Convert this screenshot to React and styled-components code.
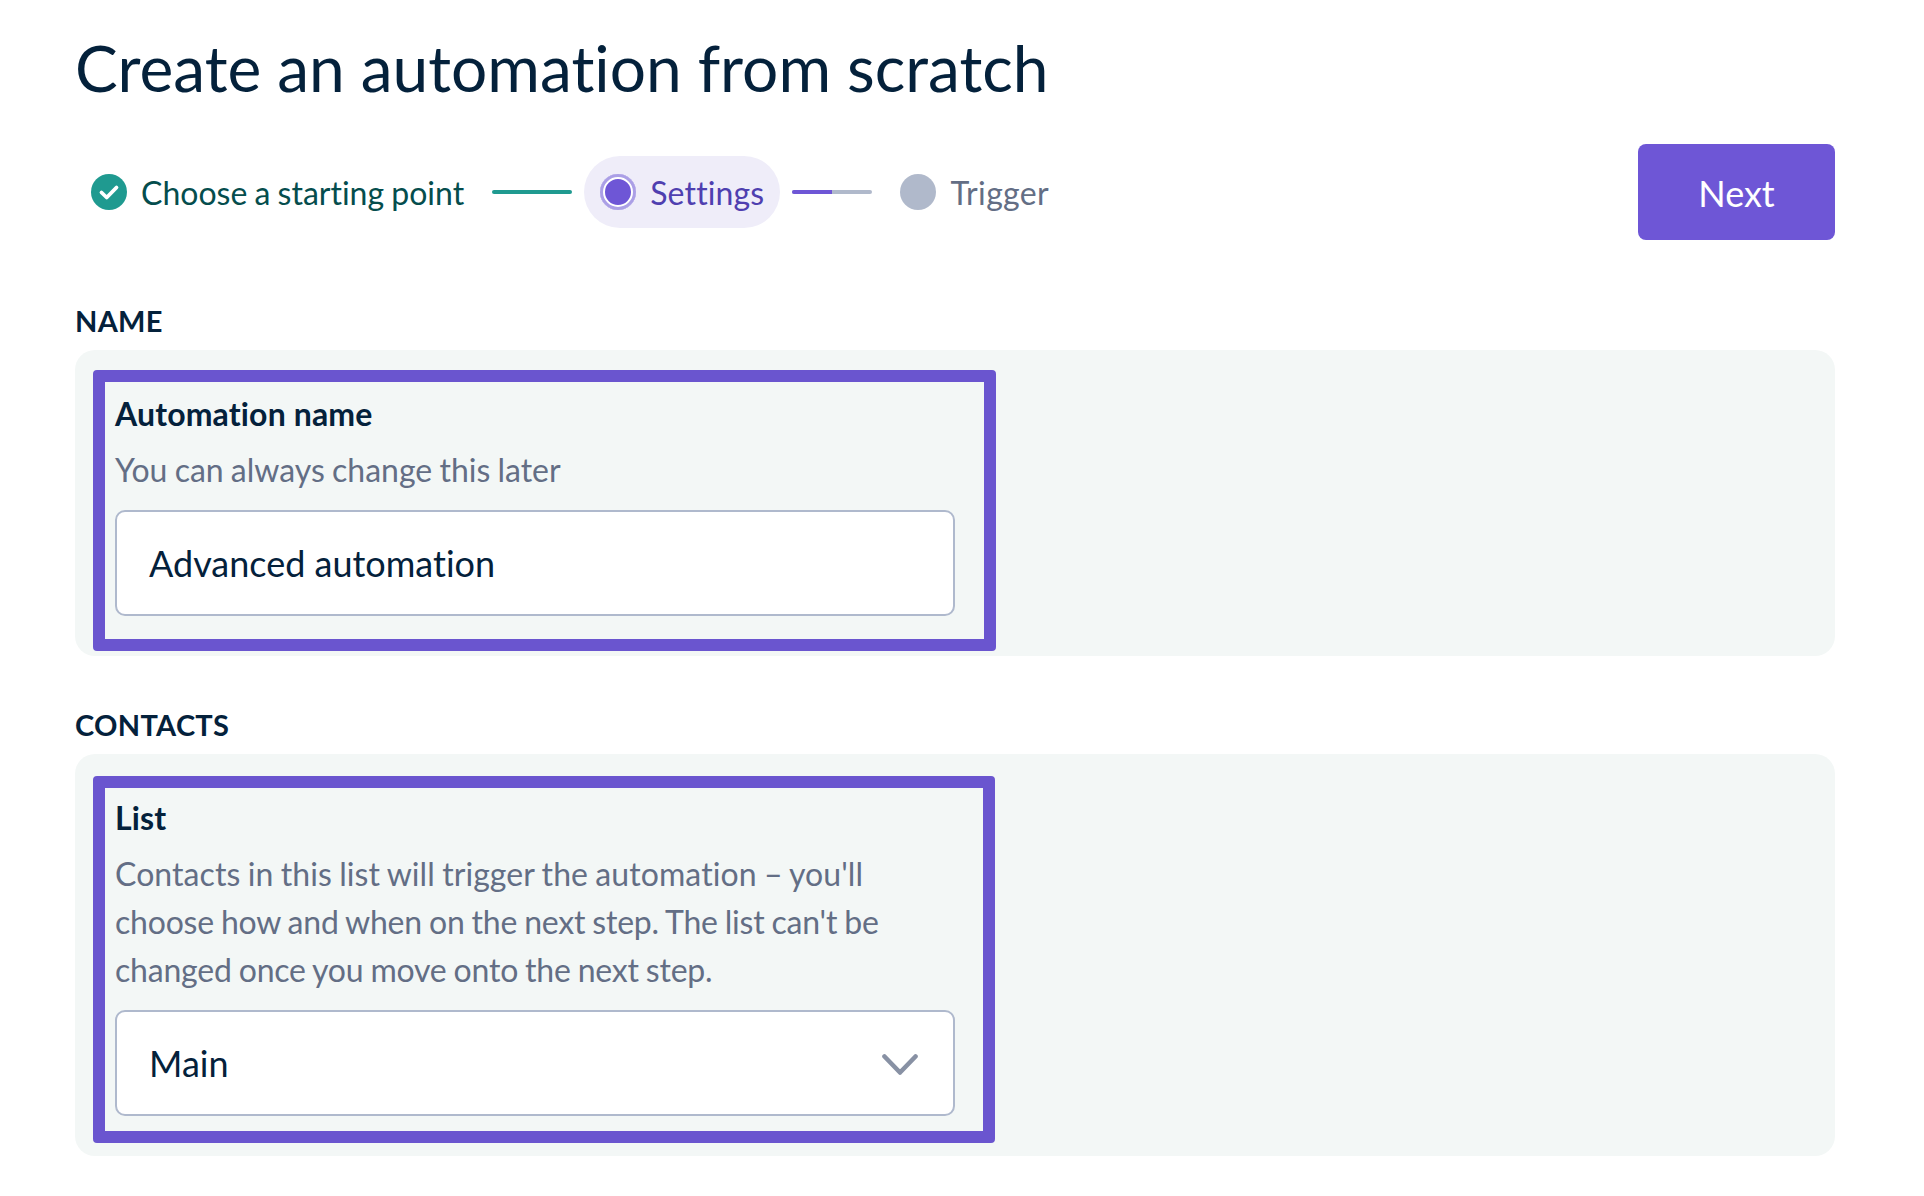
import React from "react";
import styled, { createGlobalStyle } from "styled-components";

const GlobalStyle = createGlobalStyle`
  html, body {
    margin: 0;
    padding: 0;
    background: #fff;
    font-family: Lato, "Open Sans", sans-serif;
    font-variant-ligatures: none;
    color: #04213b;
  }
`;

const Page = styled.div`
  width: 1760px;
  height: 1196px;
  padding: 0 89px 0 75px;
  box-sizing: content-box;
`;

const Title = styled.h1`
  margin: 0;
  padding-top: 29px;
  height: 85px;
  font-size: 64px;
  line-height: 78px;
  font-weight: 400;
  word-spacing: -0.4px;
  color: #04213b;
`;

const TopBar = styled.div`
  display: flex;
  align-items: center;
  justify-content: space-between;
  margin-top: 30px;
  height: 96px;
`;

const Stepper = styled.div`
  display: flex;
  align-items: center;
  padding-left: 16px;
`;

const Step = styled.div`
  display: flex;
  align-items: center;
  gap: 14px;
  height: 72px;
  font-size: 32px;
  word-spacing: -1px;
  letter-spacing: ${(p) => p.$spacing || "0"};
  color: ${(p) => p.$color};
  background: ${(p) => p.$bg || "transparent"};
  border-radius: 36px;
  padding: ${(p) => p.$padding || "0"};
`;

const Connector = styled.div`
  width: 80px;
  height: 4px;
  border-radius: 2px;
  margin: ${(p) => p.$margin};
  background: ${(p) => p.$track};
  overflow: hidden;
`;

const ConnectorFill = styled.div`
  height: 100%;
  background: ${(p) => p.$fill};
`;

const DoneIcon = styled.svg`
  width: 36px;
  height: 36px;
  flex: none;
`;

const ActiveDot = styled.span`
  width: 36px;
  height: 36px;
  flex: none;
  border-radius: 50%;
  background: #6e56d6;
  box-shadow: inset 0 0 0 3px #ab9fe6, inset 0 0 0 5px #fff;
`;

const PendingDot = styled.span`
  width: 36px;
  height: 36px;
  flex: none;
  border-radius: 50%;
  background: #b0b9cb;
`;

const NextButton = styled.button`
  width: 197px;
  height: 96px;
  padding: 2px 0 0;
  border: 0;
  border-radius: 8px;
  background: #6e56d6;
  color: #fff;
  font-family: inherit;
  font-size: 36px;
`;

const SectionLabel = styled.div`
  margin-top: ${(p) => p.$top};
  height: 32px;
  font-size: 29px;
  line-height: 32px;
  font-weight: 700;
  letter-spacing: 0.3px;
  color: #04213b;
`;

const Panel = styled.section`
  margin-top: 13px;
  height: ${(p) => p.$height};
  padding-top: ${(p) => p.$top};
  padding-left: 18px;
  box-sizing: border-box;
  background: #f3f7f6;
  border-radius: 20px;
`;

const Highlight = styled.div`
  box-sizing: border-box;
  width: ${(p) => p.$width};
  height: ${(p) => p.$height};
  padding: ${(p) => p.$paddingTop} 10px 0;
  border: 12px solid #6a55cf;
  border-radius: 4px;
`;

const FieldLabel = styled.div`
  font-size: 32px;
  line-height: 40px;
  font-weight: 700;
  letter-spacing: 0.15px;
  color: #04213b;
`;

const Help = styled.div`
  margin-top: 12px;
  font-size: 32px;
  line-height: 48px;
  word-spacing: -1px;
  color: #636e85;
`;

const HelpLine = styled.span`
  display: block;
  letter-spacing: ${(p) => p.$spacing};
`;

const Field = styled.div`
  display: flex;
  align-items: center;
  justify-content: space-between;
  box-sizing: border-box;
  width: 840px;
  height: 106px;
  margin-top: 16px;
  padding: 0 32px;
  background: #fff;
  border: 2px solid #afb9cd;
  border-radius: 10px;
  font-size: 36px;
  color: #04213b;
`;

const Caret = styled.svg`
  width: 36px;
  height: 22px;
  margin: 4px 3px 0 0;
`;

export default function App() {
  return (
    <Page>
      <GlobalStyle />
      <Title>Create an automation from scratch</Title>
      <TopBar>
        <Stepper>
          <Step $color="#054d4d">
            <DoneIcon viewBox="0 0 36 36">
              <circle cx="18" cy="18" r="18" fill="#1f9a90" />
              <path d="M10.5 18.5l5.2 5 9.8-10" fill="none" stroke="#fff" strokeWidth="3.8" strokeLinecap="round" strokeLinejoin="round" />
            </DoneIcon>
            Choose a starting point
          </Step>
          <Connector $track="#1f9a90" $margin="0 12px 0 28px" />
          <Step $color="#4f3fb0" $bg="#efedf9" $padding="0 16px" $spacing="0.15px">
            <ActiveDot />
            Settings
          </Step>
          <Connector $track="#b0b9cb" $margin="0 28px 0 12px">
            <ConnectorFill $fill="#6e56d6" style={{ width: "50%" }} />
          </Connector>
          <Step $color="#636e85" $spacing="0.35px">
            <PendingDot />
            Trigger
          </Step>
        </Stepper>
        <NextButton>Next</NextButton>
      </TopBar>

      <SectionLabel $top="65px">NAME</SectionLabel>
      <Panel $height="306px" $top="20px">
        <Highlight $width="903px" $height="281px" $paddingTop="12px">
          <FieldLabel>Automation name</FieldLabel>
          <Help>You can always change this later</Help>
          <Field>Advanced automation</Field>
        </Highlight>
      </Panel>

      <SectionLabel $top="53px">CONTACTS</SectionLabel>
      <Panel $height="402px" $top="22px">
        <Highlight $width="902px" $height="367px" $paddingTop="10px">
          <FieldLabel>List</FieldLabel>
          <Help>
            <HelpLine $spacing="0.08px">Contacts in this list will trigger the automation – you'll</HelpLine>
            <HelpLine $spacing="-0.2px">choose how and when on the next step. The list can't be</HelpLine>
            <HelpLine $spacing="-0.2px">changed once you move onto the next step.</HelpLine>
          </Help>
          <Field>
            Main
            <Caret viewBox="0 0 36 22">
              <path d="M2.5 2.5L18 18.5 33.5 2.5" fill="none" stroke="#8891a4" strokeWidth="4.6" strokeLinecap="round" strokeLinejoin="round" />
            </Caret>
          </Field>
        </Highlight>
      </Panel>
    </Page>
  );
}
